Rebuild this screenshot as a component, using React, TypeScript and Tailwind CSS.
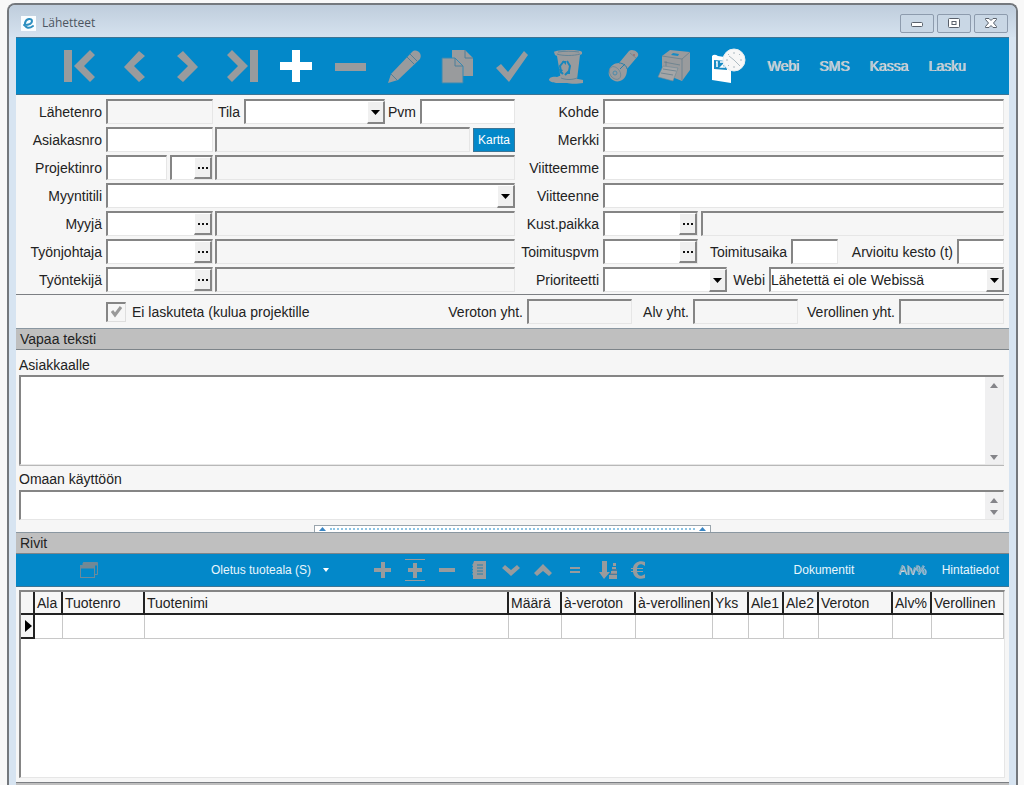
import React, { useState } from 'react';

const FIELD = 'h-[25px] min-w-0 rounded-none border-t-2 border-l-2 border-r border-b border-t-[#858585] border-l-[#858585] border-r-[#e6e6e6] border-b-[#e6e6e6] bg-white px-1 text-sm text-[#222] outline-none';
const READONLY = 'h-[25px] min-w-0 rounded-none border-t-2 border-l-2 border-r border-b border-t-[#858585] border-l-[#858585] border-r-[#e6e6e6] border-b-[#e6e6e6] bg-[#f6f6f6] px-1 text-sm text-[#222] outline-none';
const SMALL_BUTTON = 'flex w-[18px] shrink-0 items-center justify-center border-t border-l border-r-2 border-b-2 border-t-white border-l-white border-r-[#858585] border-b-[#858585] bg-[#f0f0f0]';
const WINDOW_BUTTON = 'flex h-[19px] w-[34px] items-center justify-center rounded-xs border border-[#8d9bad] bg-[#c9d7e5]';

interface FieldProps {
  id: string;
  label?: string;
  width: string;
  readOnly?: boolean;
}

const Field: React.FC<FieldProps> = ({ id, label, width, readOnly }) => (
  <input id={id} type="text" aria-label={label} readOnly={readOnly} className={`${readOnly ? READONLY : FIELD} ${width}`} />
);

const RowLabel: React.FC<{ htmlFor: string; children: React.ReactNode; width?: string }> = ({ htmlFor, children, width = 'w-[90px]' }) => (
  <label htmlFor={htmlFor} className={`${width} shrink-0 pr-1 text-right whitespace-nowrap`}>{children}</label>
);

const Lookup: React.FC<{ id: string; label: string; width: string; part?: string }> = ({ id, label, width, part }) => (
  <div className={`${FIELD} flex shrink-0 px-0! ${width}`}>
    <input id={id} type="text" aria-label={part} className="min-w-0 flex-1 px-1 outline-none" />
    <button type="button" aria-label={`Hae ${label}`} className={SMALL_BUTTON}>
      <svg width="10" height="2" viewBox="0 0 10 2" fill="#111"><path d="M0 0h2v2H0zM4 0h2v2H4zM8 0h2v2H8z" /></svg>
    </button>
  </div>
);

const Dropdown: React.FC<{ id: string; width: string; options: string[] }> = ({ id, width, options }) => (
  <div className={`relative ${width}`}>
    <select id={id} className={`${FIELD} block w-full appearance-none px-0! leading-5`}>
      {options.map(o => <option key={o} value={o}>{o}</option>)}
    </select>
    <span className={`${SMALL_BUTTON} pointer-events-none absolute top-0.5 right-0 bottom-0`}>
      <svg width="9" height="5" viewBox="0 0 9 5"><path d="M0 0h9L4.500 5z" fill="#000" /></svg>
    </span>
  </div>
);

const LookupRow: React.FC<{ id: string; label: string }> = ({ id, label }) => (
  <div className="flex items-center">
    <RowLabel htmlFor={id}>{label}</RowLabel>
    <Lookup id={id} label={label} width="w-[107px]" />
    <Field id={`${id}-nimi`} label={`${label} nimi`} width="ml-0.5 flex-1" readOnly />
  </div>
);

const SectionBar: React.FC<{ children: React.ReactNode }> = ({ children }) => (
  <h2 className="flex h-[22px] shrink-0 items-center border-t border-b border-t-[#8a97a1] border-b-[#7d8489] bg-[#bfbfbf] pl-1 text-sm">{children}</h2>
);

const Memo: React.FC<{ id: string; height: string }> = ({ id, height }) => (
  <div className={`flex border-t-2 border-l-2 border-r border-b border-t-[#858585] border-l-[#858585] border-r-[#e6e6e6] border-b-[#e6e6e6] bg-white ${height}`}>
    <textarea id={id} className="min-w-0 flex-1 resize-none p-1 text-sm outline-none" />
    <div className="flex w-[18px] flex-col justify-between bg-[#f0f0f1]">
      <button type="button" aria-label="Vieritä ylös" className="flex min-h-0 flex-1 justify-center pt-1.5">
        <svg width="8" height="5" viewBox="0 0 8 5"><path d="M0 5h8L4 0z" fill="#848489" /></svg>
      </button>
      <button type="button" aria-label="Vieritä alas" className="flex min-h-0 flex-1 items-end justify-center pb-1">
        <svg width="8" height="5" viewBox="0 0 8 5"><path d="M0 0h8L4 5z" fill="#848489" /></svg>
      </button>
    </div>
  </div>
);

const GREY = '#999b9d';

const mainTools: { label: string; icon: React.ReactNode }[] = [
  { label: 'Ensimmäinen', icon: <path d="M1 1h8v32H1zM27 1l5 5-11 11 11 11-5 5L11 17z" fill={GREY} /> },
  { label: 'Edellinen', icon: <path d="M22 2l6 5-11 10 11 11-6 5L7 18z" fill={GREY} /> },
  { label: 'Seuraava', icon: <path d="M12 2L6 7l11 10L6 28l6 5 15-15z" fill={GREY} /> },
  { label: 'Viimeinen', icon: <path d="M25 1h8v32h-8zM7 1L2 6l11 11L2 28l5 5 16-16z" fill={GREY} /> },
  { label: 'Lisää', icon: <path d="M13 1h8v12h12v8H21v12h-8V21H1v-8h12z" fill="#fff" /> },
  { label: 'Poista', icon: <path d="M2 14h31v8H2z" fill={GREY} /> },
  {
    label: 'Muokkaa',
    icon: (
      <g>
        <path d="M1 34l3-9L25 3c4-4 11 1 8 7L11 31z" fill={GREY} />
        <path d="M23 5l7 7M20 8l7 7M4 25l6 6" stroke="#527f98" strokeWidth="1" fill="none" />
      </g>
    ),
  },
  {
    label: 'Kopioi',
    icon: (
      <g fill={GREY}>
        <path d="M11 1h13l8 8v18H11z" />
        <path d="M24 1v8h8" fill="none" stroke="#4e7e98" />
        <path d="M1 9h13l8 8v17H1z" stroke="#3489b4" />
        <path d="M14 9v8h8" fill="none" stroke="#4e7e98" />
      </g>
    ),
  },
  { label: 'Hyväksy', icon: <path d="M1 19l5-4 7 8L29 2l4 4-19 27z" fill={GREY} /> },
  {
    label: 'Roskakori',
    icon: (
      <g>
        <path d="M5 3c1-2 26-3 28 0v2l-2 1-3 25c-3 2-13 2-16 0L8 7 6 6z" fill={GREY} />
        <path d="M0 31c0-3 5-4 8-3l5-2 3 4h13l5 1v3c-5 1-13 1-16 0H7c-2-1-5 0-7-3z" fill={GREY} />
        <path d="M8 5c5 2 17 2 23 0M9 3c6-1 15-1 21 0M12 29c5 2 11 2 16 0" stroke="#557f96" strokeWidth=".8" fill="none" />
        <path d="M15 12l-4 5 1 6 2 2M18 12l3 5-1 5-4 4" stroke="#1787bd" strokeWidth="2" fill="none" />
        <path d="M13 12h4v4zM21 20v5h-4zM10 20l4 1-3 4z" fill="#1787bd" />
      </g>
    ),
  },
  {
    label: 'Valaise',
    icon: (
      <g>
        <path d="M6 22c1-5 5-8 10-8L26 2c3-3 11 1 9 5l-11 13c0 6-2 10-7 12-6 2-13-4-11-10z" fill={GREY} />
        <ellipse cx="12" cy="24" rx="5" ry="7" transform="rotate(-35 12 24)" fill="none" stroke="#6d8896" strokeWidth=".8" />
        <circle cx="12" cy="24" r="2" fill="none" stroke="#4e8bab" />
        <path d="M16 14c4 0 8 3 8 6M22 15l-5 5" stroke="#287fa9" fill="none" />
        <path d="M27 4l6 5" stroke="#6d8896" strokeWidth=".8" />
        <circle cx="31" cy="6" r="1" fill="#9b6f70" />
      </g>
    ),
  },
  {
    label: 'Tulosta',
    icon: (
      <g>
        <path d="M5 7l8-6 20 2v18l-8 11-20-8z" fill={GREY} />
        <path d="M1 28l5-11 15 2-5 13z" fill="#a5a6a7" stroke="#6d8896" strokeWidth=".6" />
        <path d="M5 7l20 3 8-7M25 10v21M9 12v5M7 13l16 3M4 24l12 2M6 20l13 2" stroke="#667f8d" strokeWidth=".8" fill="none" />
        <path d="M14 6l2-2 6 1-1 2z" fill="#178bc4" />
      </g>
    ),
  },
  {
    label: 'Kalenteri',
    icon: (
      <g>
        <path d="M1 7c2-2 4-1 6 0l13 2v25L1 31z" fill="#fff" />
        <path d="M3 11l13 1v9L3 20z" fill="#178bc4" />
        <path d="M5 13h1v5M9 13h4v2l-3 3h4" stroke="#fff" strokeWidth="1.500" fill="none" />
        <circle cx="23" cy="11" r="11" fill="#f7f7f7" stroke="#e6edf0" />
        <path d="M23 3v2M23 17v2M15 11h2M29 11h2M17 5l1 1M29 5l-1 1M17 17l1-1M29 17l-1-1M18 7l5 4 5 5" stroke="#9babb4" strokeWidth=".8" fill="none" />
      </g>
    ),
  },
];

const rowTools: { label: string; icon: React.ReactNode }[] = [
  { label: 'Lisää rivi', icon: <path d="M9 3h4v6h6v4h-6v6H9v-6H2V9h7z" fill={GREY} /> },
  { label: 'Lisää väliin', icon: <path d="M9 4h4v5h5v4h-5v6H9v-6H4V9h5zM1 0h20v1H1zM1 21h20v1H1z" fill={GREY} /> },
  { label: 'Poista rivi', icon: <path d="M3 9h16v4H3z" fill={GREY} /> },
  {
    label: 'Luettelo',
    icon: (
      <g>
        <path d="M6 2h12v18H5V5z" fill={GREY} />
        <path d="M9 6h6M9 9h6M9 12h6M9 15h6" stroke="#287fa9" />
        <path d="M4 6h3M4 9h3M4 12h3M4 15h3" stroke="#999b9d" />
      </g>
    ),
  },
  { label: 'Siirrä alas', icon: <path d="M2 9l3-3 6 5 6-5 3 3-9 8z" fill={GREY} /> },
  { label: 'Siirrä ylös', icon: <path d="M2 14l3 3 6-5 6 5 3-3-9-9z" fill={GREY} /> },
  { label: 'Yhtä kuin', icon: <path d="M6 8h10v2H6zM6 12h10v2H6z" fill={GREY} /> },
  {
    label: 'Järjestä',
    icon: (
      <g fill={GREY}>
        <path d="M6 2h5v11h3l-6 7-5-7h3z" />
        <path d="M17 4h3v3h-3zM16 8h4v2h-4zM15 12h6v3h-6zM13 16h8v4h-8z" />
        <path d="M16 11h5M14 15h7" stroke="#8b7377" />
      </g>
    ),
  },
  {
    label: 'Hinta',
    icon: <path d="M17 3v4c-4-3-7-2-8 2h6v1H9v2h6v1H9c1 4 4 5 8 2v4C11 21 6 19 5 13H3v-1h2v-2H3V9h2C6 3 12 1 17 3z" fill={GREY} />,
  },
];

const columns = [
  { name: 'Ala', width: 'w-[28px]' },
  { name: 'Tuotenro', width: 'w-[82px]' },
  { name: 'Tuotenimi', width: '' },
  { name: 'Määrä', width: 'w-[53px]' },
  { name: 'à-veroton', width: 'w-[74px]' },
  { name: 'à-verollinen', width: 'w-[77px]' },
  { name: 'Yks', width: 'w-[36px]' },
  { name: 'Ale1', width: 'w-[35px]' },
  { name: 'Ale2', width: 'w-[35px]' },
  { name: 'Veroton', width: 'w-[74px]' },
  { name: 'Alv%', width: 'w-[39px]' },
  { name: 'Verollinen', width: 'w-[72px]' },
];

const TitleBar: React.FC = () => (
  <header className="flex h-8 shrink-0 items-center bg-linear-to-b from-[#bfcddc] to-[#d5e2ef] px-2 pt-1">
    <div className="flex flex-1 items-center gap-1.5 pl-1">
      <svg width="15" height="15" viewBox="0 0 15 15">
        <rect width="15" height="15" fill="#fafdff" />
        <path d="M3 9c4 0 8-1 8-4s-6-3-7 2c-1 5 4 6 8 3" fill="none" stroke="#2d8fc0" strokeWidth="2" strokeLinecap="round" />
      </svg>
      <h1 className="font-['Open_Sans',sans-serif] text-xs text-[#4c5560]">Lähetteet</h1>
    </div>
    <div className="flex gap-[3px]">
      <button type="button" aria-label="Pienennä" className={WINDOW_BUTTON}>
        <svg width="12" height="10" viewBox="0 0 12 10"><rect x=".5" y="4.500" width="11" height="4" rx="1" fill="#fff" stroke="#59606b" /></svg>
      </button>
      <button type="button" aria-label="Suurenna" className={WINDOW_BUTTON}>
        <svg width="12" height="10" viewBox="0 0 12 10" fill="#fff" stroke="#59606b"><rect x=".5" y=".5" width="11" height="9" rx="1" /><rect x="4" y="3.500" width="4" height="3" /></svg>
      </button>
      <button type="button" aria-label="Sulje" className={WINDOW_BUTTON}>
        <svg width="12" height="10" viewBox="0 0 12 10"><path d="M.5.5h3.500L6 2.500 8 .5h3.500v1L8.500 5l3 3.500v1H8L6 7.500 4 9.500H.5v-1l3-3.500-3-3.500z" fill="#fff" stroke="#59606b" /></svg>
      </button>
    </div>
  </header>
);

const MainToolbar: React.FC = () => (
  <div className="flex h-[58px] shrink-0 items-center border-t border-b border-t-[#3d7595] border-b-[#3d7595] bg-[#0388c9] pl-[37px]">
    {mainTools.map(t => (
      <button key={t.label} type="button" aria-label={t.label} className="flex w-[54px] shrink-0 justify-center">
        <svg width="34" height="34" viewBox="0 0 34 34" className="overflow-visible">{t.icon}</svg>
      </button>
    ))}
    <div className="flex items-center gap-4 pl-3 text-sm text-[#b9c1c6]">
      {['Webi', 'SMS', 'Kassa', 'Lasku'].map(name => (
        <button key={name} type="button" className="pr-1 [text-shadow:1px_0_0_#dfeaf0]">{name}</button>
      ))}
    </div>
  </div>
);

const HeaderForm: React.FC = () => (
  <div className="flex pt-1 pr-[5px] pb-0.5">
    <div className="flex w-[499px] shrink-0 flex-col gap-[3px]">
      <div className="flex items-center">
        <RowLabel htmlFor="lahetenro">Lähetenro</RowLabel>
        <Field id="lahetenro" width="w-[107px]" readOnly />
        <RowLabel htmlFor="tila" width="w-[31px]">Tila</RowLabel>
        <Dropdown id="tila" width="w-[141px]" options={['']} />
        <RowLabel htmlFor="pvm" width="w-[35px]">Pvm</RowLabel>
        <Field id="pvm" width="flex-1" />
      </div>
      <div className="flex items-center">
        <RowLabel htmlFor="asiakasnro">Asiakasnro</RowLabel>
        <Field id="asiakasnro" width="w-[107px]" />
        <Field id="asiakas-nimi" label="Asiakkaan nimi" width="ml-0.5 flex-1" readOnly />
        <button type="button" className="ml-[3px] h-6 w-[42px] border border-[#3d7595] bg-[#0388c9] text-xs text-white">Kartta</button>
      </div>
      <div className="flex items-center">
        <RowLabel htmlFor="projektinro">Projektinro</RowLabel>
        <Field id="projektinro" width="w-[61px]" />
        <Lookup id="projekti-osa" label="Projekti" part="Projektin osa" width="ml-[3px] w-[43px]" />
        <Field id="projekti-nimi" label="Projektin nimi" width="ml-0.5 flex-1" readOnly />
      </div>
      <div className="flex items-center">
        <RowLabel htmlFor="myyntitili">Myyntitili</RowLabel>
        <Dropdown id="myyntitili" width="flex-1" options={['']} />
      </div>
      <LookupRow id="myyja" label="Myyjä" />
      <LookupRow id="tyonjohtaja" label="Työnjohtaja" />
      <LookupRow id="tyontekija" label="Työntekijä" />
    </div>

    <div className="flex min-w-0 flex-1 flex-col gap-[3px]">
      {['Kohde', 'Merkki', 'Viitteemme', 'Viitteenne'].map(name => (
        <div key={name} className="flex items-center">
          <RowLabel htmlFor={name} width="w-[88px]">{name}</RowLabel>
          <Field id={name} width="flex-1" />
        </div>
      ))}
      <div className="flex items-center">
        <RowLabel htmlFor="kustpaikka" width="w-[88px]">Kust.paikka</RowLabel>
        <Lookup id="kustpaikka" label="Kust.paikka" width="w-[95px]" />
        <Field id="kustpaikka-nimi" label="Kust.paikan nimi" width="ml-[3px] flex-1" readOnly />
      </div>
      <div className="flex items-center">
        <RowLabel htmlFor="toimituspvm" width="w-[88px]">Toimituspvm</RowLabel>
        <Lookup id="toimituspvm" label="Toimituspvm" width="w-[95px]" />
        <RowLabel htmlFor="toimitusaika" width="w-[93px]">Toimitusaika</RowLabel>
        <Field id="toimitusaika" width="w-[47px]" />
        <div className="flex-1" />
        <RowLabel htmlFor="kesto" width="w-[110px]">Arvioitu kesto (t)</RowLabel>
        <Field id="kesto" width="w-[47px]" />
      </div>
      <div className="flex items-center">
        <RowLabel htmlFor="prioriteetti" width="w-[88px]">Prioriteetti</RowLabel>
        <Dropdown id="prioriteetti" width="w-[124px]" options={['']} />
        <RowLabel htmlFor="webi" width="w-[42px]">Webi</RowLabel>
        <Dropdown id="webi" width="flex-1" options={['Lähetettä ei ole Webissä']} />
      </div>
    </div>
  </div>
);

const TotalsRow: React.FC = () => {
  const [noInvoice, setNoInvoice] = useState(true);

  return (
    <div className="flex h-[34px] shrink-0 items-center border-t border-[#7c7f83] pr-[5px] pl-[90px]">
      <label className="flex flex-1 items-center gap-1.5 whitespace-nowrap">
        <span className="relative flex h-5 w-5 items-center justify-center border-t-2 border-l-2 border-r border-b border-t-[#858585] border-l-[#858585] border-r-[#dedede] border-b-[#dedede]">
          <input
            type="checkbox"
            checked={noInvoice}
            onChange={e => setNoInvoice(e.target.checked)}
            className="absolute inset-0 appearance-none"
          />
          {noInvoice && (
            <svg width="12" height="12" viewBox="0 0 12 12" className="pointer-events-none">
              <path d="M1 5l3 4 6-8" fill="none" stroke="#999" strokeWidth="3" />
            </svg>
          )}
        </span>
        Ei laskuteta (kulua projektille
      </label>
      <RowLabel htmlFor="veroton" width="w-[86px]">Veroton yht.</RowLabel>
      <Field id="veroton" width="w-[105px]" readOnly />
      <RowLabel htmlFor="alv" width="w-[61px]">Alv yht.</RowLabel>
      <Field id="alv" width="w-[105px]" readOnly />
      <RowLabel htmlFor="verollinen" width="w-[101px]">Verollinen yht.</RowLabel>
      <Field id="verollinen" width="w-[105px]" readOnly />
    </div>
  );
};

const RowToolbar: React.FC = () => (
  <div className="flex h-[33px] shrink-0 items-center border-b border-[#3d7595] bg-[#0388c9] pr-2.5 text-xs text-[#e9f6fc]">
    <button type="button" aria-label="Ikkuna" className="ml-16">
      <svg width="18" height="16" viewBox="0 0 18 16" fill="none" stroke="#6e8a99">
        <path d="M3.500 3V.5h14v12H15" />
        <path d="M3 1h14v2H3z" fill="#7b868d" />
        <rect x=".5" y="3.500" width="14" height="12" />
        <path d="M1 4h13v2H1z" fill="#7b868d" />
      </svg>
    </button>
    <button type="button" className="ml-[113px] flex items-center gap-3 whitespace-nowrap">
      Oletus tuoteala (S)
      <svg width="6" height="4" viewBox="0 0 6 4"><path d="M0 0h6L3 4z" fill="#fff" /></svg>
    </button>
    <div className="ml-[38px] flex">
      {rowTools.map(t => (
        <button key={t.label} type="button" aria-label={t.label} className="flex w-8 justify-center">
          <svg width="22" height="22" viewBox="0 0 22 22">{t.icon}</svg>
        </button>
      ))}
    </div>
    <div className="flex-1" />
    <button type="button">Dokumentit</button>
    <button type="button" className="ml-11 text-[#a3adb3] [text-shadow:1px_1px_0_#c9dbe5]">Alv%</button>
    <button type="button" className="ml-4">Hintatiedot</button>
  </div>
);

const RowsTable: React.FC = () => (
  <div className="mt-[3px] mr-1 mb-1 ml-[3px] min-h-[60px] flex-1 border-t-2 border-l-2 border-r border-b border-t-[#858585] border-l-[#858585] border-r-[#e6e6e6] border-b-[#e6e6e6] bg-white">
    <table className="w-full table-fixed border-separate border-spacing-0 text-sm">
      <thead>
        <tr className="h-[23px] bg-[#f6f6f6]">
          <th aria-label="Valittu rivi" className="w-[14px] border-r-2 border-b-2 border-[#222] p-0" />
          {columns.map(c => (
            <th key={c.name} scope="col" className={`${c.width} overflow-hidden border-r-2 border-b-2 border-[#222] p-0 pl-0.5 text-left font-normal whitespace-nowrap last:border-r last:border-r-[#b5b5b5]`}>{c.name}</th>
          ))}
        </tr>
      </thead>
      <tbody>
        <tr className="h-6">
          <td className="border-r-2 border-b-2 border-[#222] bg-[#f6f6f6] p-0 pl-1">
            <svg width="7" height="12" viewBox="0 0 7 12"><path d="M0 0v12l7-6z" fill="#000" /></svg>
          </td>
          {columns.map(c => <td key={c.name} className="border-r border-b border-[#c8c8c8] p-0" />)}
        </tr>
      </tbody>
    </table>
  </div>
);

export default function App() {
  return (
    <div className="flex h-screen min-h-[640px] min-w-[960px] flex-col bg-[#f8f8f8] pt-[3px] pr-1.5 pl-[7px] font-['Liberation_Sans',Arial,sans-serif] text-sm text-[#222]">
      <div className="flex min-h-0 flex-1 flex-col overflow-hidden rounded-t-lg border-t-2 border-r-2 border-l-2 border-[#74787d] bg-[#d7e4f1]">
        <TitleBar />
        <main className="mx-[7px] flex min-h-0 flex-1 flex-col bg-[#f6f6f6]">
          <MainToolbar />
          <HeaderForm />
          <TotalsRow />
          <SectionBar>Vapaa teksti</SectionBar>
          <div className="pr-[5px] pl-[3px]">
            <label htmlFor="asiakkaalle" className="flex h-[25px] items-center pt-1">Asiakkaalle</label>
            <Memo id="asiakkaalle" height="h-[90px]" />
            <div className="border-t border-[#b8b8b8]" />
            <label htmlFor="omaan" className="flex h-6 items-center pt-0.5">Omaan käyttöön</label>
            <Memo id="omaan" height="h-[30px]" />
          </div>
          <div className="flex h-3 shrink-0 items-end justify-center">
            <button type="button" aria-label="Piilota teksti" className="flex h-[7px] w-[397px] items-center justify-between border border-b-0 border-[#9aa5ad] bg-white px-1">
              <svg width="7" height="4" viewBox="0 0 7 4"><path d="M0 4h7L3.500 0z" fill="#3b86c4" /></svg>
              <span className="mx-1 flex-1 border-t-2 border-dotted border-[#8cc4e4]" />
              <svg width="7" height="4" viewBox="0 0 7 4"><path d="M0 4h7L3.500 0z" fill="#3b86c4" /></svg>
            </button>
          </div>
          <SectionBar>Rivit</SectionBar>
          <RowToolbar />
          <RowsTable />
          <div className="h-[3px] border-t border-[#7c7f83] bg-[#bfbfbf]" />
        </main>
      </div>
    </div>
  );
}
